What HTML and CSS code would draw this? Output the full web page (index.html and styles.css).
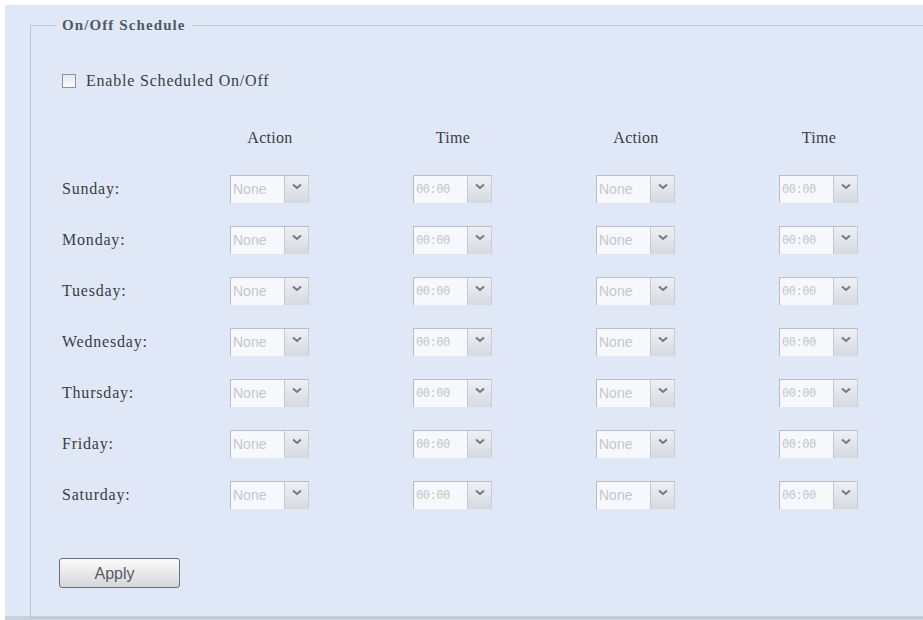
FILE: index.html
```html
<!DOCTYPE html>
<html lang="en">

<head>
    <meta charset="UTF-8">
    <meta name="viewport" content="width=device-width, initial-scale=1.0">
    <title>On/Off Schedule</title>
    <link rel="stylesheet" href="styles.css">
</head>

<body>

    <div class="panel">
        <fieldset class="schedule">
            <legend>On/Off Schedule</legend>

            <div class="inner">
                <!-- Enable checkbox -->
                <label class="enable">
                    <span class="check"></span>
                    Enable Scheduled On/Off
                </label>

                <!-- Schedule table -->
                <div class="grid">
                    <div></div>
                    <div class="head">Action</div>
                    <div class="head">Time</div>
                    <div class="head">Action</div>
                    <div class="head">Time</div>

                    <div class="day">Sunday:</div>
                    <div class="select"><span class="value">None</span><span class="arrow"><svg width="10" height="7" viewBox="0 0 10 7"><path d="M1 1.5 L5 5 L9 1.5" fill="none" stroke="#737983" stroke-width="2"/></svg></span></div>
                    <div class="select"><span class="value time">00:00</span><span class="arrow"><svg width="10" height="7" viewBox="0 0 10 7"><path d="M1 1.5 L5 5 L9 1.5" fill="none" stroke="#737983" stroke-width="2"/></svg></span></div>
                    <div class="select"><span class="value">None</span><span class="arrow"><svg width="10" height="7" viewBox="0 0 10 7"><path d="M1 1.5 L5 5 L9 1.5" fill="none" stroke="#737983" stroke-width="2"/></svg></span></div>
                    <div class="select"><span class="value time">00:00</span><span class="arrow"><svg width="10" height="7" viewBox="0 0 10 7"><path d="M1 1.5 L5 5 L9 1.5" fill="none" stroke="#737983" stroke-width="2"/></svg></span></div>

                    <div class="day">Monday:</div>
                    <div class="select"><span class="value">None</span><span class="arrow"><svg width="10" height="7" viewBox="0 0 10 7"><path d="M1 1.5 L5 5 L9 1.5" fill="none" stroke="#737983" stroke-width="2"/></svg></span></div>
                    <div class="select"><span class="value time">00:00</span><span class="arrow"><svg width="10" height="7" viewBox="0 0 10 7"><path d="M1 1.5 L5 5 L9 1.5" fill="none" stroke="#737983" stroke-width="2"/></svg></span></div>
                    <div class="select"><span class="value">None</span><span class="arrow"><svg width="10" height="7" viewBox="0 0 10 7"><path d="M1 1.5 L5 5 L9 1.5" fill="none" stroke="#737983" stroke-width="2"/></svg></span></div>
                    <div class="select"><span class="value time">00:00</span><span class="arrow"><svg width="10" height="7" viewBox="0 0 10 7"><path d="M1 1.5 L5 5 L9 1.5" fill="none" stroke="#737983" stroke-width="2"/></svg></span></div>

                    <div class="day">Tuesday:</div>
                    <div class="select"><span class="value">None</span><span class="arrow"><svg width="10" height="7" viewBox="0 0 10 7"><path d="M1 1.5 L5 5 L9 1.5" fill="none" stroke="#737983" stroke-width="2"/></svg></span></div>
                    <div class="select"><span class="value time">00:00</span><span class="arrow"><svg width="10" height="7" viewBox="0 0 10 7"><path d="M1 1.5 L5 5 L9 1.5" fill="none" stroke="#737983" stroke-width="2"/></svg></span></div>
                    <div class="select"><span class="value">None</span><span class="arrow"><svg width="10" height="7" viewBox="0 0 10 7"><path d="M1 1.5 L5 5 L9 1.5" fill="none" stroke="#737983" stroke-width="2"/></svg></span></div>
                    <div class="select"><span class="value time">00:00</span><span class="arrow"><svg width="10" height="7" viewBox="0 0 10 7"><path d="M1 1.5 L5 5 L9 1.5" fill="none" stroke="#737983" stroke-width="2"/></svg></span></div>

                    <div class="day">Wednesday:</div>
                    <div class="select"><span class="value">None</span><span class="arrow"><svg width="10" height="7" viewBox="0 0 10 7"><path d="M1 1.5 L5 5 L9 1.5" fill="none" stroke="#737983" stroke-width="2"/></svg></span></div>
                    <div class="select"><span class="value time">00:00</span><span class="arrow"><svg width="10" height="7" viewBox="0 0 10 7"><path d="M1 1.5 L5 5 L9 1.5" fill="none" stroke="#737983" stroke-width="2"/></svg></span></div>
                    <div class="select"><span class="value">None</span><span class="arrow"><svg width="10" height="7" viewBox="0 0 10 7"><path d="M1 1.5 L5 5 L9 1.5" fill="none" stroke="#737983" stroke-width="2"/></svg></span></div>
                    <div class="select"><span class="value time">00:00</span><span class="arrow"><svg width="10" height="7" viewBox="0 0 10 7"><path d="M1 1.5 L5 5 L9 1.5" fill="none" stroke="#737983" stroke-width="2"/></svg></span></div>

                    <div class="day">Thursday:</div>
                    <div class="select"><span class="value">None</span><span class="arrow"><svg width="10" height="7" viewBox="0 0 10 7"><path d="M1 1.5 L5 5 L9 1.5" fill="none" stroke="#737983" stroke-width="2"/></svg></span></div>
                    <div class="select"><span class="value time">00:00</span><span class="arrow"><svg width="10" height="7" viewBox="0 0 10 7"><path d="M1 1.5 L5 5 L9 1.5" fill="none" stroke="#737983" stroke-width="2"/></svg></span></div>
                    <div class="select"><span class="value">None</span><span class="arrow"><svg width="10" height="7" viewBox="0 0 10 7"><path d="M1 1.5 L5 5 L9 1.5" fill="none" stroke="#737983" stroke-width="2"/></svg></span></div>
                    <div class="select"><span class="value time">00:00</span><span class="arrow"><svg width="10" height="7" viewBox="0 0 10 7"><path d="M1 1.5 L5 5 L9 1.5" fill="none" stroke="#737983" stroke-width="2"/></svg></span></div>

                    <div class="day">Friday:</div>
                    <div class="select"><span class="value">None</span><span class="arrow"><svg width="10" height="7" viewBox="0 0 10 7"><path d="M1 1.5 L5 5 L9 1.5" fill="none" stroke="#737983" stroke-width="2"/></svg></span></div>
                    <div class="select"><span class="value time">00:00</span><span class="arrow"><svg width="10" height="7" viewBox="0 0 10 7"><path d="M1 1.5 L5 5 L9 1.5" fill="none" stroke="#737983" stroke-width="2"/></svg></span></div>
                    <div class="select"><span class="value">None</span><span class="arrow"><svg width="10" height="7" viewBox="0 0 10 7"><path d="M1 1.5 L5 5 L9 1.5" fill="none" stroke="#737983" stroke-width="2"/></svg></span></div>
                    <div class="select"><span class="value time">00:00</span><span class="arrow"><svg width="10" height="7" viewBox="0 0 10 7"><path d="M1 1.5 L5 5 L9 1.5" fill="none" stroke="#737983" stroke-width="2"/></svg></span></div>

                    <div class="day">Saturday:</div>
                    <div class="select"><span class="value">None</span><span class="arrow"><svg width="10" height="7" viewBox="0 0 10 7"><path d="M1 1.5 L5 5 L9 1.5" fill="none" stroke="#737983" stroke-width="2"/></svg></span></div>
                    <div class="select"><span class="value time">00:00</span><span class="arrow"><svg width="10" height="7" viewBox="0 0 10 7"><path d="M1 1.5 L5 5 L9 1.5" fill="none" stroke="#737983" stroke-width="2"/></svg></span></div>
                    <div class="select"><span class="value">None</span><span class="arrow"><svg width="10" height="7" viewBox="0 0 10 7"><path d="M1 1.5 L5 5 L9 1.5" fill="none" stroke="#737983" stroke-width="2"/></svg></span></div>
                    <div class="select"><span class="value time">00:00</span><span class="arrow"><svg width="10" height="7" viewBox="0 0 10 7"><path d="M1 1.5 L5 5 L9 1.5" fill="none" stroke="#737983" stroke-width="2"/></svg></span></div>
                </div>

                <button class="apply">Apply</button>
            </div>
        </fieldset>
    </div>

</body>

</html>
```

FILE: styles.css
```css
body {
    margin: 0;
    background: #fff;
    overflow: hidden;
    font-family: "Liberation Serif", "DejaVu Serif", serif;
    color: #3a3d42;
}

.panel {
    margin: 5px 0 0 5px;
    padding-top: 12px;
    height: 599px;
    background: #e0e8f7;
    border-bottom: 4px solid #c9d1dd;
}

.schedule {
    margin: 0 -40px 0 25px;
    padding: 0;
    border: 1px solid #bcc5d2;
}

.schedule legend {
    margin-left: 25px;
    padding: 0 6px;
    font-size: 15px;
    line-height: 16px;
    font-weight: bold;
    letter-spacing: 1.1px;
    color: #4e5965;
}

.inner {
    padding: 38px 0 29px 31px;
}

/* checkbox row */
.enable {
    display: flex;
    align-items: center;
    gap: 10px;
    height: 20px;
    font-size: 16px;
    letter-spacing: 0.8px;
}

.check {
    width: 12px;
    height: 12px;
    border: 1px solid #8d939b;
    background: linear-gradient(#e6e8ec, #fbfbfc);
}

/* schedule table */
.grid {
    display: grid;
    grid-template-columns: 168px 183px 183px 183px 183px;
    grid-auto-rows: 51px;
    align-items: center;
    margin-top: 21px;
}

.head {
    width: 80px;
    text-align: center;
    font-size: 16px;
    letter-spacing: 0.3px;
}

.day {
    font-size: 16px;
    letter-spacing: 0.8px;
}

.select {
    display: flex;
    width: 79px;
    height: 28px;
    border-top: 1px solid #b9bec6;
    border-right: 1px solid #c9ced6;
    box-sizing: border-box;
}

.select .value {
    width: 51px;
    border-left: 1px solid #b9bec6;
    border-right: 1px solid #c4c9d1;
    background: #f6f8fb;
    color: #c3c7cd;
    font-family: "Liberation Sans", sans-serif;
    font-size: 14px;
    line-height: 26px;
    padding-left: 2px;
}

.select .value.time {
    font-family: "DejaVu Sans Mono", monospace;
    font-size: 12px;
    letter-spacing: -0.5px;
}

.select .arrow {
    flex: 1;
    display: flex;
    justify-content: center;
    padding-top: 7px;
    background: linear-gradient(#eef0f4, #d5d9e0);
}

.apply {
    display: block;
    margin: 38px 0 0 -3px;
    width: 121px;
    height: 30px;
    border: 1px solid #6c7078;
    border-radius: 3px;
    background: linear-gradient(#fbfbfb, #e4e5e7 60%, #d3d5d8);
    font-family: "Liberation Sans", sans-serif;
    font-size: 16px;
    color: #575a5f;
    padding: 2px 10px 0 0;
}
```
